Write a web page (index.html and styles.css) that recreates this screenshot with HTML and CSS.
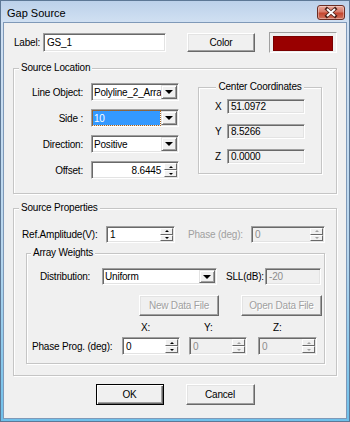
FILE: index.html
```html
<!DOCTYPE html>
<html lang="en">
<head>
    <meta charset="UTF-8">
    <title>Gap Source</title>
    <link rel="stylesheet" href="styles.css">
</head>
<body>
    <div class="window">
        <!-- Title bar -->
        <div class="title-bar">
            <span class="title">Gap Source</span>
            <div class="close-button">
                <svg width="26" height="13" viewBox="0 0 26 13">
                    <path d="M9 3 L17 10 M17 3 L9 10" stroke="#4a2018" stroke-width="3.6" stroke-linecap="square"/>
                    <path d="M9 3 L17 10 M17 3 L9 10" stroke="#ffffff" stroke-width="2"/>
                </svg>
            </div>
        </div>

        <div class="client">
            <!-- Label / colour row -->
            <div class="label-row">
                <span class="name-label">Label:</span>
                <div class="textbox name-box">GS_1</div>
                <div class="btn color-btn">Color</div>
                <div class="swatch"><div class="swatch-fill"></div></div>
            </div>

            <!-- Source location group -->
            <fieldset class="group location-group">
                <legend>Source Location</legend>
                <div class="location-body">
                    <div class="location-grid">
                        <span class="field-label">Line Object:</span>
                        <div class="textbox combo">
                            <span class="combo-text">Polyline_2_Arra</span>
                            <span class="drop-btn"><i class="arrow-down"></i></span>
                        </div>

                        <span class="field-label">Side :</span>
                        <div class="textbox combo">
                            <span class="combo-text selected">10</span>
                            <span class="drop-btn"><i class="arrow-down"></i></span>
                        </div>

                        <span class="field-label">Direction:</span>
                        <div class="textbox combo">
                            <span class="combo-text">Positive</span>
                            <span class="drop-btn"><i class="arrow-down"></i></span>
                        </div>

                        <span class="field-label">Offset:</span>
                        <div class="textbox spin">
                            <span class="spin-text right">8.6445</span>
                            <span class="spin-btns">
                                <span class="spin-btn"><i class="arrow-up"></i></span>
                                <span class="spin-btn"><i class="arrow-down small"></i></span>
                            </span>
                        </div>
                    </div>

                    <fieldset class="group center-group">
                        <legend>Center Coordinates</legend>
                        <div class="center-grid">
                            <span>X</span>
                            <div class="textbox readonly">51.0972</div>
                            <span>Y</span>
                            <div class="textbox readonly">8.5266</div>
                            <span>Z</span>
                            <div class="textbox readonly">0.0000</div>
                        </div>
                    </fieldset>
                </div>
            </fieldset>

            <!-- Source properties group -->
            <fieldset class="group props-group">
                <legend>Source Properties</legend>
                <div class="props-body">
                    <div class="amp-row">
                        <span class="amp-label">Ref.Amplitude(V):</span>
                        <div class="textbox spin amp-box">
                            <span class="spin-text">1</span>
                            <span class="spin-btns">
                                <span class="spin-btn"><i class="arrow-up"></i></span>
                                <span class="spin-btn"><i class="arrow-down small"></i></span>
                            </span>
                        </div>
                        <span class="phase-label disabled-text">Phase (deg):</span>
                        <div class="textbox spin disabled phase-box">
                            <span class="spin-text">0</span>
                            <span class="spin-btns">
                                <span class="spin-btn"><i class="arrow-up"></i></span>
                                <span class="spin-btn"><i class="arrow-down small"></i></span>
                            </span>
                        </div>
                    </div>

                    <fieldset class="group array-group">
                        <legend>Array Weights</legend>
                        <div class="array-body">
                            <div class="dist-row">
                                <span class="dist-label">Distribution:</span>
                                <div class="textbox combo dist-combo">
                                    <span class="combo-text">Uniform</span>
                                    <span class="drop-btn"><i class="arrow-down"></i></span>
                                </div>
                                <span class="sll-label">SLL(dB):</span>
                                <div class="textbox disabled sll-box">-20</div>
                            </div>

                            <div class="file-row">
                                <div class="btn disabled-btn new-btn">New Data File</div>
                                <div class="btn disabled-btn open-btn">Open Data File</div>
                            </div>

                            <div class="axis-row">
                                <span class="axis-x">X:</span>
                                <span class="axis-y">Y:</span>
                                <span class="axis-z">Z:</span>
                            </div>

                            <div class="prog-row">
                                <span class="prog-label">Phase Prog. (deg):</span>
                                <div class="textbox spin prog-box">
                                    <span class="spin-text">0</span>
                                    <span class="spin-btns">
                                        <span class="spin-btn"><i class="arrow-up"></i></span>
                                        <span class="spin-btn"><i class="arrow-down small"></i></span>
                                    </span>
                                </div>
                                <div class="textbox spin disabled prog-box prog-y">
                                    <span class="spin-text">0</span>
                                    <span class="spin-btns">
                                        <span class="spin-btn"><i class="arrow-up"></i></span>
                                        <span class="spin-btn"><i class="arrow-down small"></i></span>
                                    </span>
                                </div>
                                <div class="textbox spin disabled prog-box prog-z">
                                    <span class="spin-text">0</span>
                                    <span class="spin-btns">
                                        <span class="spin-btn"><i class="arrow-up"></i></span>
                                        <span class="spin-btn"><i class="arrow-down small"></i></span>
                                    </span>
                                </div>
                            </div>
                        </div>
                    </fieldset>
                </div>
            </fieldset>

            <!-- Dialog buttons -->
            <div class="dialog-buttons">
                <div class="btn default-btn ok-btn">OK</div>
                <div class="btn cancel-btn">Cancel</div>
            </div>
        </div>
    </div>
</body>
</html>
```

FILE: styles.css
```css
/* Reset */
* {
    box-sizing: border-box;
    margin: 0;
    padding: 0;
}

body {
    font-family: "Liberation Sans", Arial, sans-serif;
    font-size: 10px;
    letter-spacing: -0.2px;
    color: #000;
    background: #ffffff;
}

/* Window frame */
.window {
    width: 350px;
    height: 422px;
    border: 1px solid #5d7896;
    padding: 0 2px 2px 2px;
    background: linear-gradient(#bcd1ea 0, #d0e0f2 21px, #b7d6ee 60%, #6fc0ea 100%);
    display: flex;
    flex-direction: column;
}

.title-bar {
    height: 21px;
    display: flex;
    align-items: flex-start;
    justify-content: space-between;
    padding-left: 4px;
    padding-right: 2px;
}

.title {
    font-size: 11px;
    letter-spacing: 0;
    line-height: 13px;
    margin-top: 6px;
}

.close-button {
    width: 28px;
    height: 15px;
    margin-top: 4px;
    border: 1px solid #6b2d24;
    border-radius: 3px;
    background: linear-gradient(#e9a99b 0, #d77a69 45%, #c4462f 55%, #d0735e 100%);
    box-shadow: inset 0 0 0 1px rgba(255, 255, 255, 0.35);
    display: flex;
    align-items: center;
    justify-content: center;
}

.close-button svg {
    display: block;
}

/* Client area */
.client {
    flex: 1;
    background: #f0f0f0;
    border: 1px solid #7f99b8;
}

/* Common controls */
.textbox {
    display: flex;
    align-items: center;
    background: #ffffff;
    border: 1px solid;
    border-color: #a0a0a0 #ffffff #ffffff #a0a0a0;
    box-shadow: inset 1px 1px 0 #696969, inset -1px -1px 0 #e3e3e3;
    padding: 1px 1px 1px 3px;
    white-space: nowrap;
    overflow: hidden;
}

.textbox.readonly,
.textbox.disabled {
    background: #f0f0f0;
}

.textbox.disabled {
    color: #8d8d8d;
}

.btn {
    display: flex;
    align-items: center;
    justify-content: center;
    background: #f0f0f0;
    border: 1px solid;
    border-color: #ffffff #696969 #696969 #ffffff;
    box-shadow: inset -1px -1px 0 #a0a0a0, inset 1px 1px 0 #e3e3e3;
}

.disabled-btn {
    color: #a0a0a0;
    text-shadow: 1px 1px 0 #ffffff;
}

.default-btn {
    border: 1px solid #000;
    box-shadow: inset 1px 1px 0 #ffffff, inset -1px -1px 0 #696969, inset -2px -2px 0 #a0a0a0;
}

.disabled-text {
    color: #a0a0a0;
}

/* Group boxes */
.group {
    border: 1px solid #c5c5c5;
    box-shadow: 1px 1px 0 #ffffff, inset 1px 1px 0 #ffffff;
    min-width: 0;
}

.group legend {
    padding: 0 2px;
    margin-left: 5px;
    line-height: 12px;
    background: #f0f0f0;
}

/* Combo boxes */
.combo {
    padding-left: 2px;
    padding-right: 1px;
}

.combo-text {
    flex: 1;
    height: 100%;
    display: flex;
    align-items: center;
    overflow: hidden;
}

.combo-text.selected {
    background: #3399ff;
    color: #ffffff;
    outline: 1px dotted #a8641e;
    padding-left: 1px;
    margin-left: -1px;
    margin-right: 1px;
}

.drop-btn {
    width: 16px;
    flex-shrink: 0;
    height: 100%;
    display: flex;
    align-items: center;
    justify-content: center;
    background: #f0f0f0;
    border: 1px solid;
    border-color: #e3e3e3 #696969 #696969 #e3e3e3;
    box-shadow: inset 1px 1px 0 #ffffff, inset -1px -1px 0 #a0a0a0;
}

.arrow-down {
    width: 0;
    height: 0;
    border-left: 4px solid transparent;
    border-right: 4px solid transparent;
    border-top: 4px solid #000;
}

.arrow-down.small {
    border-left-width: 2px;
    border-right-width: 2px;
    border-top-width: 2px;
}

.arrow-up {
    width: 0;
    height: 0;
    border-left: 2px solid transparent;
    border-right: 2px solid transparent;
    border-bottom: 2px solid #000;
}

.disabled .arrow-up {
    border-bottom-color: #a0a0a0;
}

.disabled .arrow-down {
    border-top-color: #a0a0a0;
}

/* Spin boxes */
.spin-text {
    flex: 1;
}

.spin-text.right {
    text-align: right;
    padding-right: 3px;
}

.spin-btns {
    width: 13px;
    flex-shrink: 0;
    height: 100%;
    display: flex;
    flex-direction: column;
}

.spin-btn {
    flex: 1;
    display: flex;
    align-items: center;
    justify-content: center;
    background: #f0f0f0;
    border: 1px solid;
    border-color: #ffffff #696969 #696969 #ffffff;
}

/* Label row */
.label-row {
    display: flex;
    align-items: center;
    height: 19px;
    margin-top: 10px;
    padding-left: 10px;
}

.name-label {
    width: 29px;
}

.name-box {
    width: 123px;
    height: 19px;
}

.color-btn {
    width: 68px;
    height: 19px;
    margin-left: 21px;
}

.swatch {
    width: 68px;
    height: 21px;
    margin-left: 14px;
    border: 1px solid;
    border-color: #a0a0a0 #ffffff #ffffff #a0a0a0;
    padding: 3px 3px 1px 3px;
}

.swatch-fill {
    height: 100%;
    background: #990000;
    border: 1px solid #7a0000;
}

/* Source location */
.location-group {
    width: 324px;
    margin: 10px 0 0 9px;
}

.location-body {
    display: flex;
    align-items: flex-start;
    padding: 7px 0 14px 0;
}

.location-grid {
    display: grid;
    grid-template-columns: 69px 88px;
    grid-auto-rows: 18px;
    column-gap: 8px;
    row-gap: 8px;
    margin-top: 2px;
}

.field-label {
    text-align: right;
    align-self: center;
}

.center-group {
    width: 124px;
    margin-left: 19px;
}

.center-group legend {
    margin-left: auto;
    margin-right: auto;
}

.center-grid {
    display: grid;
    grid-template-columns: 7px 78px;
    grid-auto-rows: 17px;
    column-gap: 5px;
    row-gap: 8px;
    padding: 5px 0 8px 16px;
    align-items: center;
}

/* Source properties */
.props-group {
    width: 324px;
    margin: 8px 0 0 9px;
}

.props-body {
    padding: 12px 0 11px 8px;
}

.amp-row {
    display: flex;
    align-items: center;
    height: 17px;
}

.amp-label {
    width: 84px;
}

.amp-box {
    width: 69px;
    height: 17px;
}

.phase-label {
    width: 63px;
    margin-left: 13px;
}

.phase-box {
    width: 74px;
    height: 17px;
}

.array-group {
    width: 299px;
    margin: 4px 0 0 4px;
}

.array-group legend {
    margin-left: 4px;
}

.array-body {
    padding: 9px 0 8px 0;
}

.dist-row {
    display: flex;
    align-items: center;
    height: 17px;
    padding-left: 13px;
}

.dist-label {
    width: 62px;
}

.dist-combo {
    width: 115px;
    height: 17px;
}

.sll-label {
    width: 39px;
    margin-left: 9px;
}

.sll-box {
    width: 56px;
    height: 17px;
}

.file-row {
    display: flex;
    height: 21px;
    margin-top: 10px;
    padding-left: 112px;
    gap: 22px;
}

.new-btn {
    width: 80px;
}

.open-btn {
    width: 81px;
}

.axis-row {
    display: flex;
    margin-top: 6px;
    padding-left: 114px;
    line-height: 12px;
}

.axis-x {
    width: 63px;
}

.axis-y {
    width: 69px;
}

.prog-row {
    display: flex;
    align-items: center;
    height: 18px;
    margin-top: 3px;
    padding-left: 5px;
}

.prog-label {
    width: 90px;
}

.prog-box {
    width: 58px;
    height: 18px;
}

.prog-y {
    margin-left: 9px;
}

.prog-z {
    width: 59px;
    margin-left: 11px;
}

/* OK / Cancel */
.dialog-buttons {
    display: flex;
    justify-content: center;
    gap: 22px;
    margin-top: 8px;
}

.ok-btn {
    width: 68px;
    height: 21px;
}

.cancel-btn {
    width: 69px;
    height: 21px;
}
```
